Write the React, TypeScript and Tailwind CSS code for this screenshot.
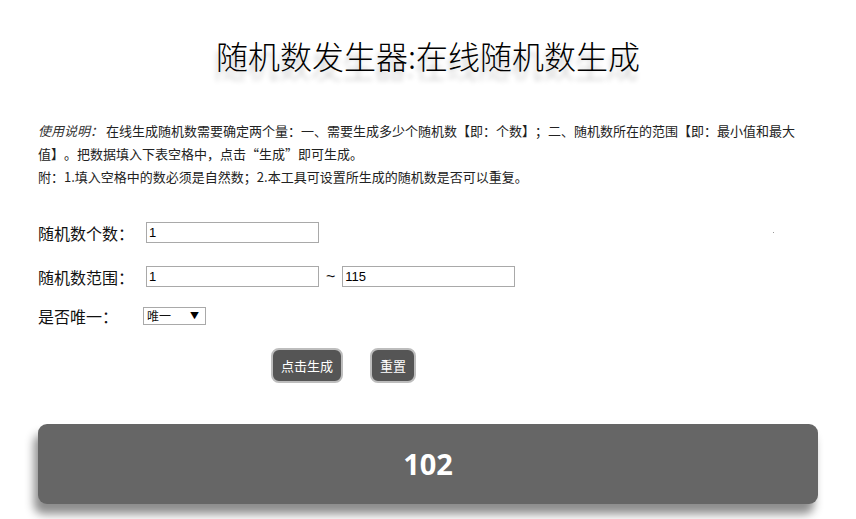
import React, { useState } from 'react';

const cjk = "font-['Microsoft_YaHei','Noto_Sans_CJK_SC',sans-serif] [text-spacing-trim:space-all]";

const FieldInput = ({ value, onChange }: { value: string; onChange: (v: string) => void }) => (
  <input
    value={value}
    onChange={(e) => onChange(e.target.value)}
    className="w-[173px] h-[21px] border border-[#a9a9a9] bg-white px-[2px] text-[13px] text-black outline-none font-['Liberation_Sans',Arial,sans-serif]"
  />
);

const ActionButton = ({ label, onClick }: { label: string; onClick: () => void }) => (
  <button
    onClick={onClick}
    className={`h-[35px] px-[8px] rounded-[8px] bg-[#555555] border-2 border-[#bdbdbd] text-white text-[13px] leading-none ${cjk}`}
  >
    {label}
  </button>
);

export default function App() {
  const [count, setCount] = useState('1');
  const [min, setMin] = useState('1');
  const [max, setMax] = useState('115');
  const [unique, setUnique] = useState('唯一');
  const [result, setResult] = useState('102');

  const generate = () => {
    const n = Math.max(1, parseInt(count) || 1);
    const lo = parseInt(min) || 0;
    const hi = parseInt(max) || 0;
    const out: number[] = [];
    for (let i = 0; i < n; i++) {
      let v = lo + Math.floor(Math.random() * (hi - lo + 1));
      if (unique === '唯一' && hi - lo + 1 >= n) {
        while (out.includes(v)) v = lo + Math.floor(Math.random() * (hi - lo + 1));
      }
      out.push(v);
    }
    setResult(out.join(' '));
  };

  const reset = () => {
    setCount('1');
    setMin('1');
    setMax('115');
    setUnique('唯一');
  };

  return (
    <div className={`min-h-[519px] bg-white text-[#222] ${cjk}`}>
      {/* 标题 */}
      <h1 className="pt-[33px] text-center text-[32px] leading-[44px] font-light text-black [text-shadow:-2px_9px_5px_rgba(0,0,0,0.22)]">
        随机数发生器:在线随机数生成
      </h1>

      <div className="px-[38px]">
        {/* 使用说明 */}
        <div className="mt-[42px] w-[764px] text-[13px] leading-[23px] text-[#222]">
          <p>
            <em className="pr-[3px] text-[#333]">使用说明：</em>
            在线生成随机数需要确定两个量：一、需要生成多少个随机数【即：个数】；二、随机数所在的范围【即：最小值和最大值】。把数据填入下表空格中，点击“生成”即可生成。
          </p>
          <p>附：1.填入空格中的数必须是自然数；2.本工具可设置所生成的随机数是否可以重复。</p>
        </div>

        {/* 表单 */}
        <div className="mt-[34px] flex flex-col text-[16px] text-[#111]">
          <div className="flex items-center h-[21px]">
            <span className="w-[108px]">随机数个数：</span>
            <FieldInput value={count} onChange={setCount} />
            <span className="ml-auto mr-[44px] w-[1px] h-[1px] bg-[#999]" />
          </div>
          <div className="flex items-center h-[21px] mt-[23px]">
            <span className="w-[108px]">随机数范围：</span>
            <FieldInput value={min} onChange={setMin} />
            <span className="mx-[7px] text-[16px] leading-none font-['Liberation_Sans',sans-serif]">~</span>
            <FieldInput value={max} onChange={setMax} />
          </div>
          <div className="flex items-center h-[18px] mt-[20px]">
            <span className="w-[105px]">是否唯一：</span>
            <div className="relative w-[63px] h-[18px] border border-[#a9a9a9] bg-white">
              <select
                value={unique}
                onChange={(e) => setUnique(e.target.value)}
                className="appearance-none block w-full h-[16px] pl-[3px] py-0 text-[12px] leading-[16px] bg-transparent outline-none"
              >
                <option>唯一</option>
                <option>可重复</option>
              </select>
              <span className="pointer-events-none absolute right-[6px] top-[2px] text-[9px] leading-[12px] text-black">▼</span>
            </div>
          </div>
        </div>

        {/* 按钮 */}
        <div className="mt-[23px] ml-[233px] flex gap-[27px]">
          <ActionButton label="点击生成" onClick={generate} />
          <ActionButton label="重置" onClick={reset} />
        </div>

        {/* 结果 */}
        <div className="mt-[41px] h-[80px] rounded-[9px] bg-[#666666] flex items-center justify-center shadow-[-4px_10px_10px_rgba(0,0,0,0.45)]">
          <span className="text-white text-[29px] font-bold font-['Open_Sans',sans-serif]">{result}</span>
        </div>
      </div>
    </div>
  );
}
